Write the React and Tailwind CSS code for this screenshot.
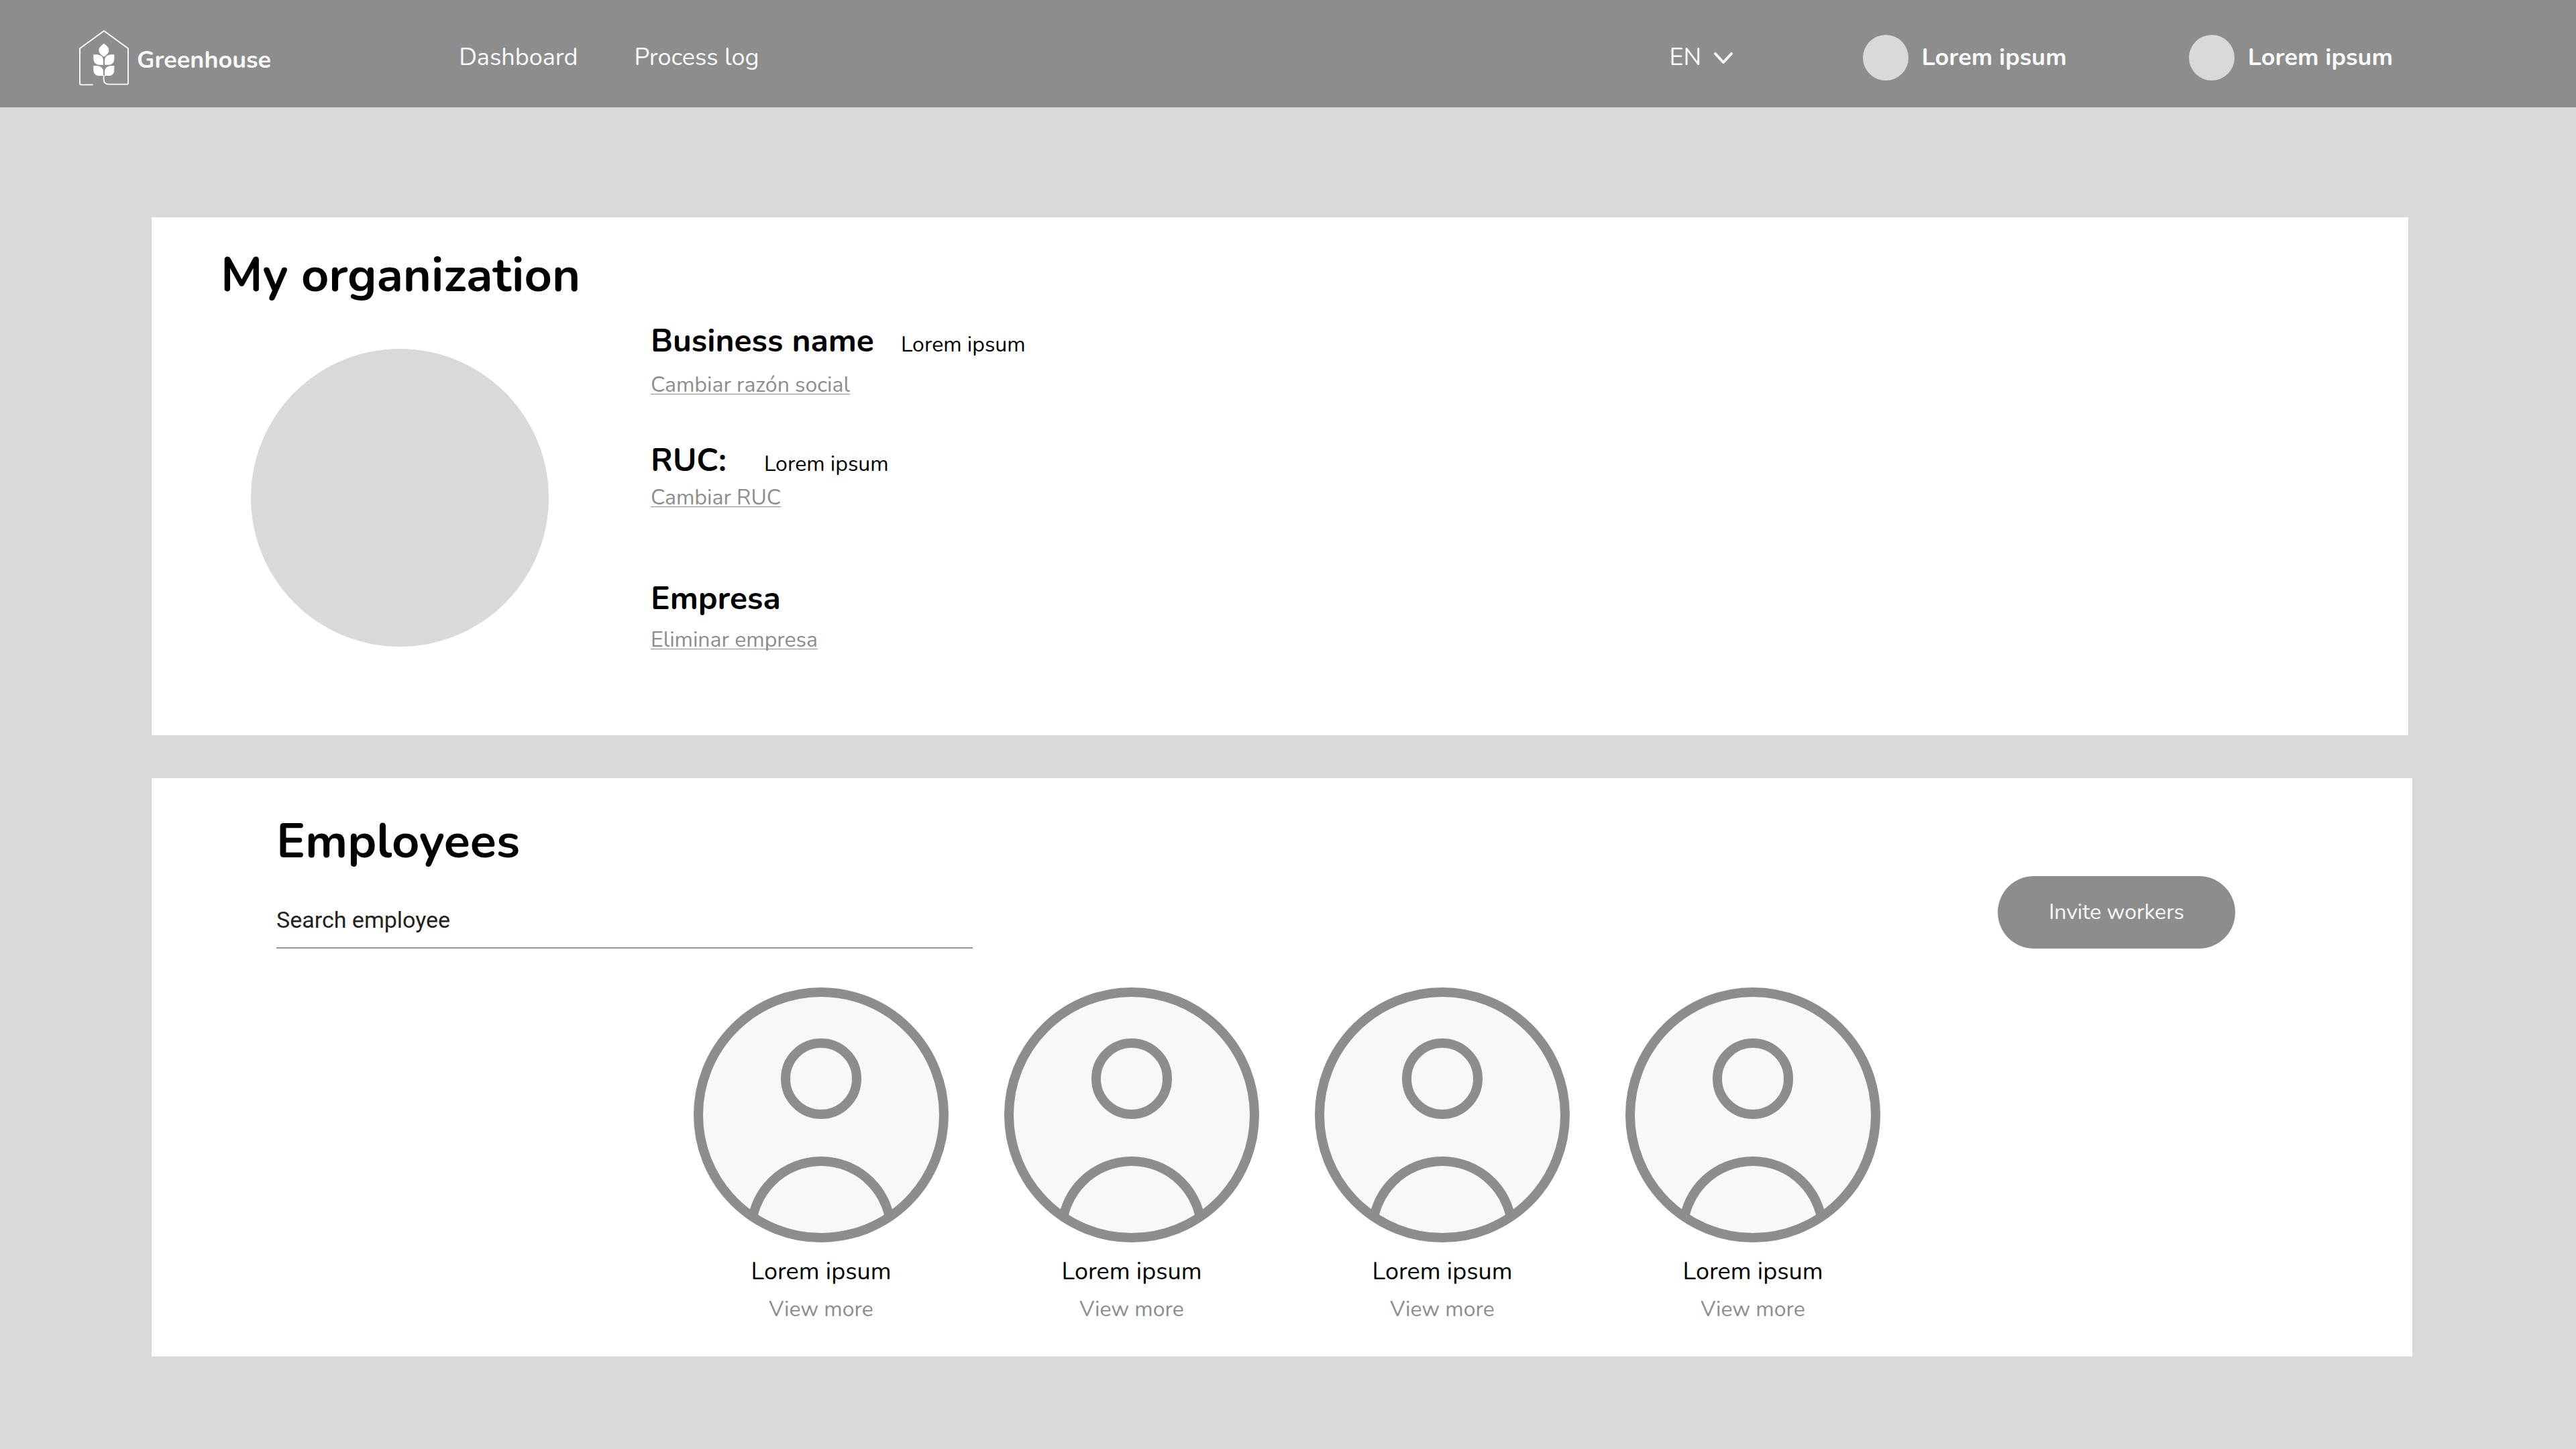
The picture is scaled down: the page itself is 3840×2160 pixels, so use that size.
import React from "react";

const navLinks = ["Dashboard", "Process log"];
const accounts = [
  { id: "organization", name: "Lorem ipsum" },
  { id: "user", name: "Lorem ipsum" },
];
const employees = [
  { id: 1, name: "Lorem ipsum" },
  { id: 2, name: "Lorem ipsum" },
  { id: 3, name: "Lorem ipsum" },
  { id: 4, name: "Lorem ipsum" },
];

function Logo() {
  return (
    <svg viewBox="114 134 222 249" className="h-[83px] w-[74px] shrink-0" aria-hidden="true">
      <path
        d="M176 378H123Q117 378 117 372V216L222 139Q225 136 228 139L333 216V372Q333 376 329 376H246Q224 376 224 354V336"
        fill="none"
        stroke="#fff"
        strokeWidth="5.5"
        strokeLinejoin="round"
      />
      <g fill="#fff">
        <path d="M225 193C238 203 247 212 247 223C247 237 236 245 225 253C214 245 202 237 202 223C202 212 212 203 225 193Z" />
        <path d="M178 243H195Q222 246 222 271V289H204Q178 287 178 262Z" />
        <path d="M271 243H255Q228 246 228 271V289H246Q271 287 271 262Z" />
        <path d="M178 293H195Q222 296 222 321V338H200Q178 336 178 312Z" />
        <path d="M271 293H255Q228 296 228 321V338H249Q271 336 271 312Z" />
      </g>
    </svg>
  );
}

function Avatar() {
  return (
    <svg viewBox="0 0 380 380" className="h-[380px] w-[380px]" fill="none" stroke="#8d8d8d" strokeWidth="14" aria-hidden="true">
      <defs>
        <clipPath id="avatar-clip">
          <circle cx="190" cy="190" r="183" />
        </clipPath>
      </defs>
      <circle cx="190" cy="190" r="183" fill="#f8f8f8" />
      <circle cx="190" cy="136" r="53" />
      <circle cx="190" cy="363" r="104" clipPath="url(#avatar-clip)" />
    </svg>
  );
}

function Detail({ label, value, action, rowClass, linkClass }) {
  return (
    <div className="flex flex-col items-start">
      <div className={"flex items-baseline " + rowClass}>
        <h2 className="text-[48px] leading-[60px] font-bold">{label}</h2>
        {value && <p className="text-[32px] leading-[44px]">{value}</p>}
      </div>
      <a
        href="#"
        className={
          "text-[32px] leading-[44px] text-[#8d8d8d] underline decoration-1 underline-offset-[3px] [text-decoration-skip-ink:none] " +
          linkClass
        }
      >
        {action}
      </a>
    </div>
  );
}

export default function App() {
  return (
    <div className="min-h-screen bg-[#d9d9d9] pb-[138px] font-['Nunito','Lato',sans-serif] text-black">
      <header className="flex h-[160px] items-center justify-between bg-[#8d8d8d] pt-3 pr-[273px] pl-[118px] text-[36px] leading-[48px] text-[#f8f8f8]">
        <div className="flex items-center">
          <a href="#" className="flex items-center gap-3 font-bold">
            <Logo />
            <span className="pt-2">Greenhouse</span>
          </a>
          <nav className="ml-[280px] flex gap-[84px]">
            {navLinks.map((link) => (
              <a key={link} href="#">
                {link}
              </a>
            ))}
          </nav>
        </div>
        <div className="flex items-center">
          <div className="relative mr-[194px]">
            <select aria-label="Language" className="w-[94px] appearance-none bg-transparent outline-none">
              <option>EN</option>
            </select>
            <svg
              viewBox="0 0 28 18"
              className="pointer-events-none absolute top-4 right-0 h-[18px] w-[28px]"
              fill="none"
              stroke="#f8f8f8"
              strokeWidth="4"
              strokeLinecap="round"
              strokeLinejoin="round"
              aria-hidden="true"
            >
              <path d="M2 2L14 15L26 2" />
            </svg>
          </div>
          <div className="flex gap-[182px]">
            {accounts.map((account) => (
              <button key={account.id} type="button" className="flex items-center gap-5 font-bold">
                <span className="h-[68px] w-[68px] rounded-full bg-[#d9d9d9]" />
                {account.name}
              </button>
            ))}
          </div>
        </div>
      </header>

      <main className="flex flex-col gap-16 pt-[164px] pl-[226px]">
        <section className="mr-[250px] bg-white px-[103px] pt-[42px] pb-[120px]">
          <h1 className="text-[72px] leading-[88px] font-bold">My organization</h1>
          <div className="flex items-start">
            <div className="mt-[66px] ml-[45px] h-[444px] w-[444px] shrink-0 rounded-full bg-[#d9d9d9]" />
            <div className="ml-[152px] pt-6">
              <Detail label="Business name" value="Lorem ipsum" action="Cambiar razón social" rowClass="gap-10" linkClass="mt-[14px]" />
              <Detail label="RUC:" value="Lorem ipsum" action="Cambiar RUC" rowClass="mt-[60px] gap-14" linkClass="mt-1" />
              <Detail label="Empresa" action="Eliminar empresa" rowClass="mt-[98px]" linkClass="mt-[10px]" />
            </div>
          </div>
        </section>

        <section className="mr-[244px] bg-white pt-[50px] pb-12">
          <div className="flex items-end justify-between pr-[264px] pl-[186px]">
            <div className="w-[1038px]">
              <h1 className="text-[72px] leading-[88px] font-bold">Employees</h1>
              <input
                type="search"
                aria-label="Search employee"
                placeholder="Search employee"
                className="mt-12 h-[68px] w-full border-b-2 border-[#979797] bg-transparent pb-4 font-['Roboto',sans-serif] text-[34px] leading-[44px] text-[#212121] outline-none placeholder:text-[#212121] placeholder:opacity-100"
              />
            </div>
            <button
              type="button"
              className="h-[108px] w-[354px] rounded-full bg-[#8d8d8d] text-[32px] leading-[44px] text-[#f8f8f8]"
            >
              Invite workers
            </button>
          </div>
          <ul className="mt-[58px] ml-[808px] flex gap-[83px]">
            {employees.map((employee) => (
              <li key={employee.id} className="flex flex-col items-center">
                <Avatar />
                <p className="mt-5 text-[36px] leading-[48px]">{employee.name}</p>
                <a href="#" className="mt-[10px] text-[32px] leading-[44px] text-[#8d8d8d]">
                  View more
                </a>
              </li>
            ))}
          </ul>
        </section>
      </main>
    </div>
  );
}
